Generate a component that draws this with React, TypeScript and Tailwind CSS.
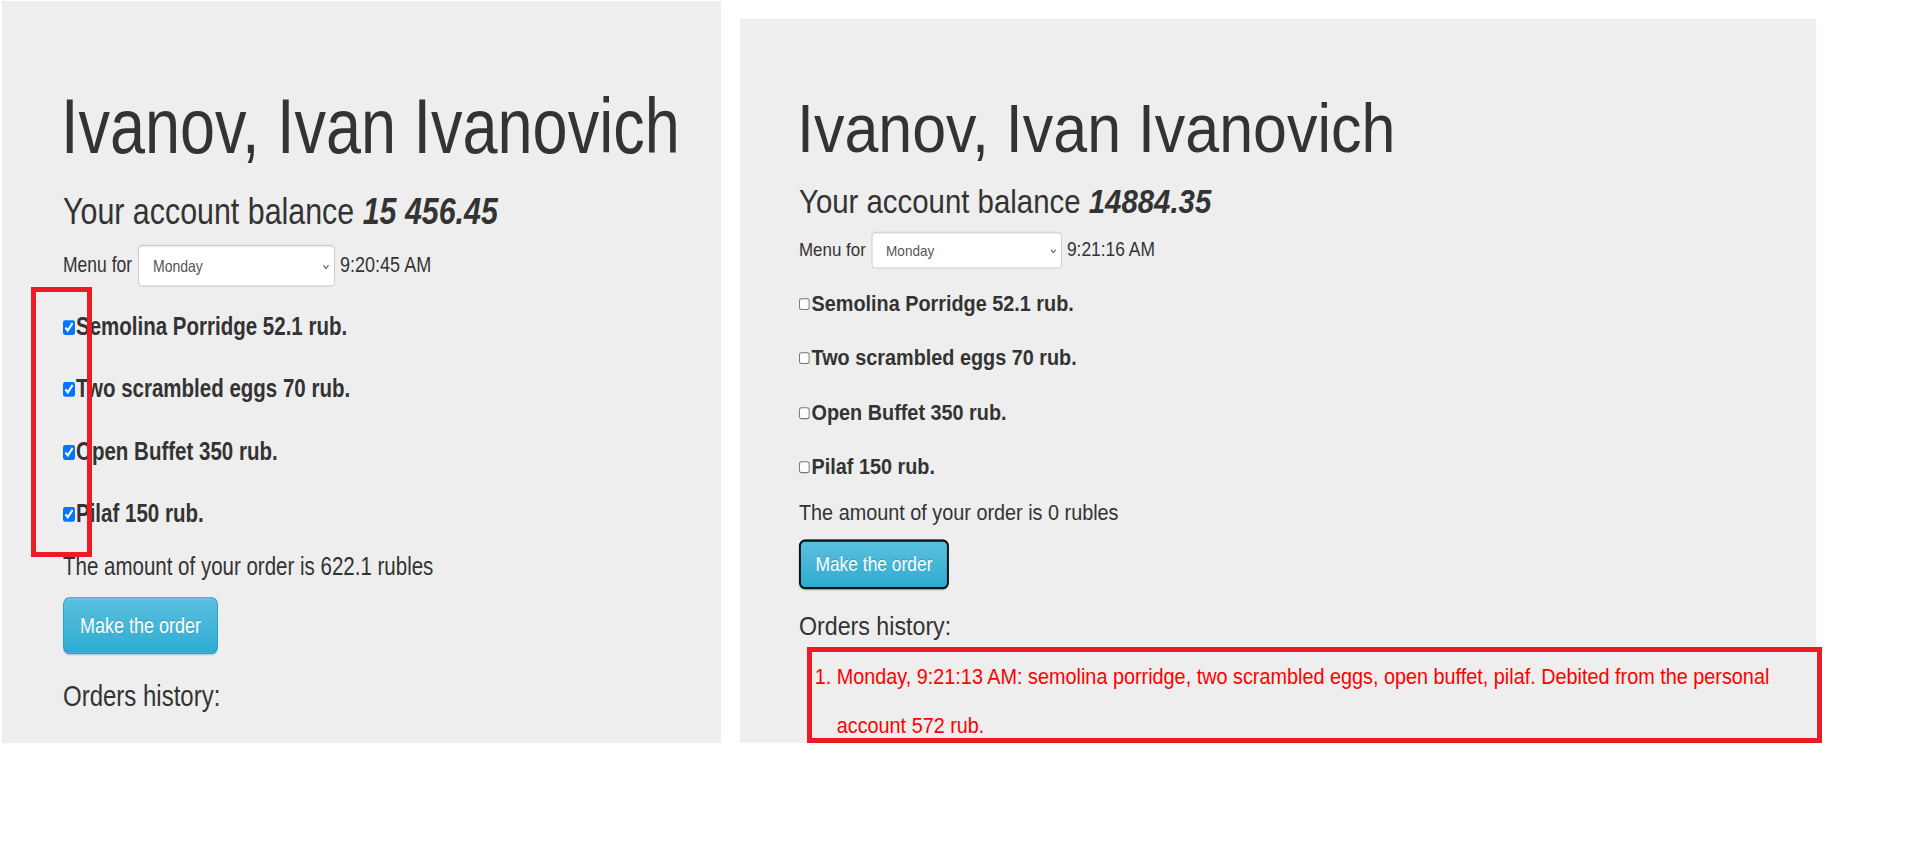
type Dish = { name: string; price: string };

const dishes: Dish[] = [
  { name: 'Semolina Porridge', price: '52.1' },
  { name: 'Two scrambled eggs', price: '70' },
  { name: 'Open Buffet', price: '350' },
  { name: 'Pilaf', price: '150' },
];

type PanelProps = {
  balance: string;
  time: string;
  checked: boolean;
  total: string;
  focused?: boolean;
  history?: string[];
  className: string;
  checkClassName: string;
};

const OrderPanel = ({
  balance,
  time,
  checked,
  total,
  focused,
  history,
  className,
  checkClassName,
}: PanelProps) => {
  return (
    <section
      className={`shrink-0 origin-top-left bg-[#eee] text-[#333] pl-[61px] pr-2 pt-[67px] flex flex-col items-start ${className}`}
    >
      {/* Name */}
      <h1 className="-ml-[2px] text-[63px] leading-[68px] font-normal whitespace-nowrap">
        Ivanov, Ivan Ivanovich
      </h1>

      {/* Balance */}
      <h2 className="mt-[16.7px] text-[30.4px] leading-[34px] font-normal whitespace-nowrap">
        Your account balance <strong className="font-bold italic">{balance}</strong>
      </h2>

      {/* Day picker */}
      <div className="mt-[11px] flex items-baseline">
        <span className="text-[17.5px]">Menu for</span>
        <div className="relative flex ml-[6px]">
          <select
            defaultValue="Monday"
            className="appearance-none w-[197px] h-[34px] pl-[14px] pr-6 py-[6px] text-[14px] leading-[20px] text-[#555] bg-white border border-[#ccc] rounded-[4px] shadow-[inset_0_1px_1px_rgba(0,0,0,0.075)]"
          >
            <option>Monday</option>
            <option>Tuesday</option>
            <option>Wednesday</option>
            <option>Thursday</option>
            <option>Friday</option>
          </select>
          <svg
            className="pointer-events-none absolute right-[6px] top-[16px] w-[6px] h-[4px]"
            viewBox="0 0 6 4"
            fill="none"
          >
            <path d="M0.5 0.5 L3 3.3 L5.5 0.5" stroke="#555" strokeWidth="1" />
          </svg>
        </div>
        <span className="ml-[5px] text-[18px]">{time}</span>
      </div>

      {/* Dishes */}
      <div className="mt-[17.2px] flex flex-col gap-[20.5px]">
        {dishes.map((dish) => (
          <label
            key={dish.name}
            className="flex items-end text-[20.5px] leading-[30px] font-bold whitespace-nowrap"
          >
            <input
              type="checkbox"
              defaultChecked={checked}
              className={`mb-[8px] ${checkClassName}`}
            />
            <span>
              {dish.name} {dish.price} rub.
            </span>
          </label>
        ))}
      </div>

      <p className="mt-[12.4px] text-[20.5px] leading-[30px]">
        The amount of your order is {total} rubles
      </p>

      <button
        className={`mt-[10.7px] px-[16px] py-[10px] text-[18px] leading-[24px] text-white border border-[#28a4c9] rounded-[6px] bg-linear-to-b from-[#5bc0de] to-[#2aabd2] [text-shadow:0_-1px_0_rgba(0,0,0,0.2)] shadow-[inset_0_1px_0_rgba(255,255,255,0.15),0_1px_1px_rgba(0,0,0,0.075)] ${
          focused ? 'outline-2 outline-[#111] -outline-offset-2' : ''
        }`}
      >
        Make the order
      </button>

      <h3 className="mt-[20.4px] text-[24px] leading-[26.4px] font-normal">Orders history:</h3>

      {history && history.length > 0 && (
        <ol className="mt-[10.7px] w-[1044px] pl-[39px] list-decimal text-[20.5px] leading-[45px] text-[#ff0000]">
          {history.map((entry) => (
            <li key={entry}>{entry}</li>
          ))}
        </ol>
      )}
    </section>
  );
};

export default function App() {
  return (
    <div className="relative w-[1914px] h-[858px] overflow-hidden bg-white font-['Liberation_Sans',Arial,sans-serif]">
      <div className="flex items-start">
        <OrderPanel
          balance="15 456.45"
          time="9:20:45 AM"
          checked
          total="622.1"
          className="mt-[1px] ml-[2px] w-[719px] h-[600px] scale-y-[1.237]"
          checkClassName="w-3 h-3 mr-[1px]"
        />
        <OrderPanel
          balance="14884.35"
          time="9:21:16 AM"
          checked={false}
          total="0"
          focused
          history={[
            'Monday, 9:21:13 AM: semolina porridge, two scrambled eggs, open buffet, pilaf. Debited from the personal account 572 rub.',
          ]}
          className="mt-[19px] ml-[18.6px] w-[1113px] h-[670px] scale-x-[0.967] scale-y-[1.08]"
          checkClassName="w-[11px] h-[12px] mr-[2px]"
        />
      </div>

      {/* Red annotation frames drawn over the screenshots */}
      <div className="pointer-events-none absolute left-[31px] top-[287px] w-[61px] h-[270px] border-[5px] border-[#ed1c24]" />
      <div className="pointer-events-none absolute left-[807px] top-[647px] w-[1015px] h-[96px] border-[5px] border-[#ed1c24]" />
    </div>
  );
}
